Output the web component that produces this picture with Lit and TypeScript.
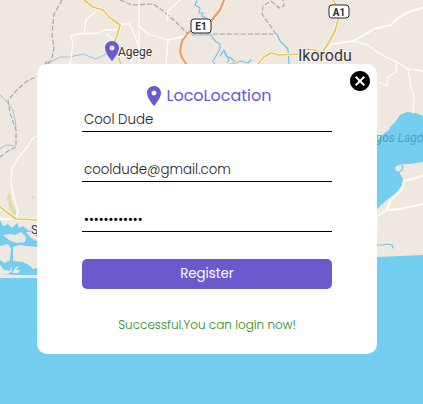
import { LitElement, html, css, svg } from "lit";
import { customElement, state } from "lit/decorators.js";

const PIN =
  "M12 2C8.13 2 5 5.13 5 9c0 5.25 7 13 7 13s7-7.75 7-13c0-3.87-3.13-7-7-7zm0 9.5c-1.38 0-2.5-1.12-2.5-2.5s1.12-2.5 2.5-2.5 2.5 1.12 2.5 2.5-1.12 2.5-2.5 2.5z";
const CANCEL =
  "M12 2C6.47 2 2 6.47 2 12s4.47 10 10 10 10-4.47 10-10S17.53 2 12 2zm5 13.59L15.59 17 12 13.41 8.41 17 7 15.59 10.59 12 7 8.41 8.41 7 12 10.59 15.59 7 17 8.41 13.41 12 17 15.59z";

@customElement("city-map")
class CityMap extends LitElement {
  static styles = css`
    :host { display: block; background: #73cef0; }
    .map { display: block; width: 100%; height: 100%; }
    .land { fill: #eee8e1; }
    .water { fill: #73cef0; }
    .park { fill: #dedcae; }
    .line { fill: none; stroke-linejoin: round; stroke-linecap: round; }
    .minor { stroke: #fffdf9; stroke-width: 1.3; }
    .wide { stroke: #fffdf9; stroke-width: 2; }
    .case { stroke: #fffaf0; stroke-width: 3; }
    .major { stroke: #e8c74f; stroke-width: 1.7; }
    .highway { stroke: #f09a5c; stroke-width: 2; }
    .river { stroke: #6fc4e6; stroke-width: 1.2; }
    .stream { stroke: #9dc3da; stroke-width: 1; }
    .border { stroke: #a2a2a8; stroke-width: 1.1; stroke-dasharray: 5 2; stroke-linecap: butt; }
    .label { font-family: "Roboto", sans-serif; fill: #35353a; stroke: #f7f3ee; stroke-width: 2; paint-order: stroke; }
    .town { font-size: 12px; }
    .city { font-size: 16px; }
    .lagoon { font-family: "Roboto", sans-serif; font-size: 12px; font-style: italic; fill: #4c9fc4; }
    .shield { fill: #fff; stroke: #29292e; stroke-width: 1; }
    .route { font-family: "Roboto", sans-serif; font-size: 10px; font-weight: 700; fill: #29292e; text-anchor: middle; }
    .pin { fill: #6a5acd; }
  `;

  private line(kind: string, d: string) {
    return svg`<path class="line ${kind}" d=${d}></path>`;
  }

  private major(d: string) {
    return svg`${this.line("case", d)}${this.line("major", d)}`;
  }

  render() {
    return html`
      <svg class="map" viewBox="0 0 423 404" preserveAspectRatio="xMidYMid slice" role="img" aria-label="Map of Lagos">
        <path class="land" d="M0 0H423V255L400 256 377 257 300 262 150 270 37 277 0 277Z"></path>
        <path class="water" d="M340 150L377 140 382 135 389 130 390 127 396 121 400 115 407 112 416 113 423 116V162L410 164 403 164 397 166 395 169 399 172 403 179 402 185 396 193 388 199 381 205 370 216 340 220Z"></path>
        <path class="land" d="M396 166l5-1 1 3-3 4-4-2z"></path>
        <path class="line river" d="M403 165l-1 5-3 2M377 245l6 0 4-1 5 1 1 3"></path>
        <path class="water" d="M0 220L3 226 8 224 12 228 17 223 19 228 23 226 29 231 32 229 37 235V276L0 274Z"></path>
        <path class="land" d="M3 235l7-1 5 1 6-3 5 5-1 5-9 1-7-3zM0 246l8-2 3 5-1 11-5 3-5-3zM13 247l7-2 6 1 11 1v21l-4 1-4-4-6-3-10-1zM0 265l4 5 6 1 1-5 1 5-4 3-8 0zM12 273l4-6 3-1-3 4 4 0-2 3h-6zM26 232l6 0 5 5v4l-6-3z"></path>
        <path class="land" d="M0 275H37V278H0Z"></path>
        <path class="park" d="M9 192L11 195 11 201 16 212 15 216 10 209 7 198ZM31 199l2-4 2 4z"></path>

        ${this.line("stream", "M0 95L8 103 13 110 15 120 16 127M0 149L6 145 15 146M45 65L60 57 70 57 83 54 96 59 106 54")}
        ${this.line("border", "M62 0L54 14 52 34 54 48 52 58 47 65M47 61L38 76 27 81 17 90 8 100 10 113 16 130 16 147 8 151 0 157")}
        ${this.line("border", "M120 0L132 5 153 4 162 10 176 22 188 34 211 34 276 34 262 14 263 6 271 1 279 8 284 6 283 0")}
        ${this.line("river", "M197 0L195 5 200 8 199 13 203 13 202 16 206 18M211 35L215 41 220 44 220 49 213 61 215 65M220 56L224 50 229 60 226 65M224 50L226 56 231 58 236 63 241 61 248 63 251 60M277 34L280 41 288 49 289 65")}
        ${this.line("stream", "M186 35H211")}

        ${this.line("minor", "M104 9L95 12 86 20 84 33M70 65L73 44 71 36 79 34 98 33 104 30 118 30 122 24 130 24 139 47M114 40L106 34M139 0V65M139 26L148 34 168 40 190 35M139 48L131 62M168 40L166 65M180 0L168 11 167 21M118 55L132 58 146 53")}
        ${this.line("wide", "M423 8L411 11 399 17 391 25 374 29 354 41 332 44 322 53")}
        ${this.line("minor", "M354 41L368 45 377 52 390 59 397 62 408 69 423 71M397 62L396 72 388 77 387 86 377 82M408 69L411 87 414 97 413 113M37 136L33 138 27 147 18 158 12 168 11 184 14 198 18 211 16 217")}
        ${this.line("wide", "M377 216L387 210 400 209 423 204M387 209L390 201 402 189 404 181 423 176M0 219H12")}
        ${this.line("highway", "M224 0L220 10 211 21 196 27 188 33 182 41 180 51 182 58 187 65")}
        ${this.major("M84 0L93 7 103 10 109 17 120 25 117 36 114 43 121 65")}
        ${this.major("M333 0L338 8 338 20 335 31 329 42 324 50 322 55M257 65L264 57 271 53 279 55 298 54 304 49 315 50 324 56M227 65L233 63 240 65")}
        ${this.major("M0 207L8 213 16 219 37 220")}

        <rect class="shield" x="191" y="19" width="20" height="14" rx="3"></rect>
        <text class="route" x="201" y="30">E1</text>
        <rect class="shield" x="329" y="5" width="20" height="13" rx="3"></rect>
        <text class="route" x="339" y="16">A1</text>
        <text class="label town" x="118" y="56">Agege</text>
        <text class="label city" x="298" y="61">Ikorodu</text>
        <text class="label town" x="31" y="234">Sat</text>
        <text class="lagoon" x="363" y="142">Lagos Lagoon</text>
        <path class="pin" transform="translate(100 39)" d=${PIN}></path>
      </svg>
    `;
  }
}

@customElement("register-card")
class RegisterCard extends LitElement {
  static styles = css`
    :host {
      display: block;
      position: relative;
      box-sizing: border-box;
      padding: 20px 45px;
      border-radius: 10px;
      background: #fff;
      font-family: "Poppins", sans-serif;
    }
    .icon { display: block; width: 24px; height: 24px; fill: currentColor; }
    .logo {
      display: flex;
      align-items: center;
      justify-content: center;
      margin: 0;
      color: #6a5acd;
      font-size: 16px;
      font-weight: 400;
      line-height: 26px;
      height: 24px;
    }
    .form { display: flex; flex-direction: column; gap: 27px; }
    .fields { display: flex; flex-direction: column; gap: 26px; }
    .field {
      box-sizing: border-box;
      width: 100%;
      height: 24px;
      padding: 0 2px;
      border: 0;
      border-bottom: 1px solid #000;
      border-radius: 0;
      outline: 0;
      background: none;
      color: #222;
      font-family: inherit;
      font-weight: 300;
    }
    .secret { color: #000; }
    .submit {
      height: 30px;
      padding: 0;
      border: 0;
      border-radius: 5px;
      background: #6a5acd;
      color: #fff;
      font-family: inherit;
      cursor: pointer;
    }
    .message {
      margin: 0;
      color: #228b22;
      font-size: 12px;
      font-weight: 300;
      line-height: 18px;
      text-align: center;
    }
    .close {
      position: absolute;
      top: 5px;
      right: 5px;
      padding: 0;
      border: 0;
      background: none;
      color: #000;
      cursor: pointer;
    }
  `;

  render() {
    return html`
      <h1 class="logo">
        <svg class="icon" viewBox="0 0 24 24" aria-hidden="true"><path d=${PIN}></path></svg>LocoLocation
      </h1>
      <form class="form" @submit=${(e: Event) => e.preventDefault()}>
        <div class="fields">
          <input class="field" type="text" aria-label="Username" .value=${"Cool Dude"} />
          <input class="field" type="email" aria-label="Email" .value=${"cooldude@gmail.com"} />
          <input class="field secret" type="password" aria-label="Password" .value=${"cooldude1234"} />
        </div>
        <button class="submit" type="submit">Register</button>
        <p class="message" role="status">Successful.You can login now!</p>
      </form>
      <button class="close" type="button" aria-label="Close" @click=${() => this.dispatchEvent(new CustomEvent("close"))}>
        <svg class="icon" viewBox="0 0 24 24" aria-hidden="true"><path d=${CANCEL}></path></svg>
      </button>
    `;
  }
}

@customElement("app-root")
class AppRoot extends LitElement {
  static styles = css`
    :host {
      display: flex;
      position: relative;
      justify-content: center;
      align-items: flex-start;
      box-sizing: border-box;
      min-height: 100vh;
      padding: 64px 9px 50px 0;
    }
    .backdrop { position: absolute; inset: 0; }
    .card { width: 100%; max-width: 340px; }
  `;

  @state() private open = true;

  render() {
    return html`
      <city-map class="backdrop"></city-map>
      ${this.open ? html`<register-card class="card" @close=${() => (this.open = false)}></register-card>` : ""}
    `;
  }
}
